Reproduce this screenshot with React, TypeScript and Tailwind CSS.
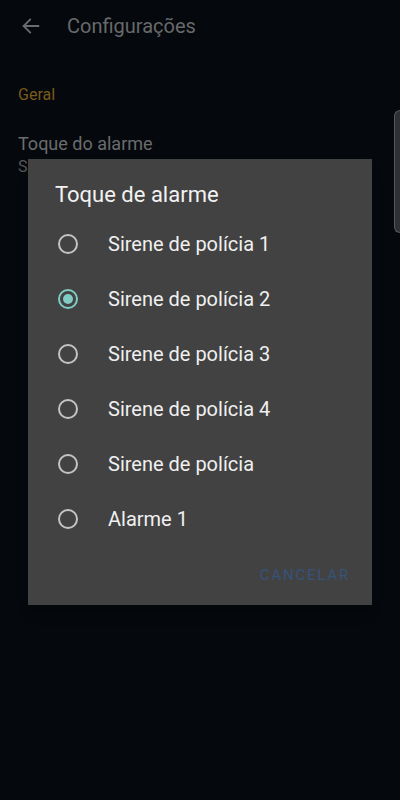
import { useState } from "react";

const OPTIONS = [
  "Sirene de polícia 1",
  "Sirene de polícia 2",
  "Sirene de polícia 3",
  "Sirene de polícia 4",
  "Sirene de polícia",
  "Alarme 1",
];

function Radio({ checked }: { checked: boolean }) {
  return (
    <span
      className={`flex h-[20px] w-[20px] shrink-0 items-center justify-center rounded-full border-2 ${
        checked ? "border-[#80cbc4]" : "border-[#c4c4c4]"
      }`}
    >
      {checked && <span className="h-[10px] w-[10px] rounded-full bg-[#80cbc4]" />}
    </span>
  );
}

export default function App() {
  const [selected, setSelected] = useState(1);

  return (
    <div
      className="relative h-[800px] w-[400px] overflow-hidden bg-[#05080c]"
      style={{ fontFamily: "Roboto, 'Noto Sans', sans-serif" }}
    >
      <div className="flex h-[52px] items-center pl-[20px]">
        <svg width="22" height="22" viewBox="0 0 24 24" fill="none">
          <path
            d="M20 12H4M11 5l-7 7 7 7"
            stroke="#6a6b6d"
            strokeWidth="2"
            strokeLinecap="square"
          />
        </svg>
        <span className="ml-[25px] text-[20px] text-[#68696b]">Configurações</span>
      </div>

      <div className="px-[18px] pt-[32px]">
        <p className="text-[16px] leading-[22px] text-[#7a5b1c]">Geral</p>
        <div className="mt-[26px]">
          <p className="text-[18px] leading-[24px] text-[#6b6c6e]">Toque do alarme</p>
          <p className="text-[16px] leading-[22px] text-[#55575a]">Sirene de polícia 2</p>
        </div>
      </div>

      <div className="absolute right-0 top-[110px] h-[123px] w-[6px] rounded-l-[6px] border border-r-0 border-[#55585c] bg-[#2e3034]" />

      <div className="absolute left-[28px] top-[159px] w-[344px] bg-[#424242] pb-[12px] shadow-lg">
        <h2 className="pl-[27px] pt-[22px] text-[22px] leading-[28px] text-[#f2f2f2]">
          Toque de alarme
        </h2>
        <div className="mt-[7px]">
          {OPTIONS.map((label, i) => (
            <button
              key={label}
              type="button"
              onClick={() => setSelected(i)}
              className="flex h-[55px] w-full items-center pl-[30px] text-left"
            >
              <Radio checked={selected === i} />
              <span className="ml-[30px] text-[20px] text-[#f0f0f0]">{label}</span>
            </button>
          ))}
        </div>
        <div className="mt-[11px] flex justify-end pr-[22px]">
          <button
            type="button"
            className="h-[36px] text-[15px] tracking-[0.12em] text-[#36537a]"
          >
            CANCELAR
          </button>
        </div>
      </div>
    </div>
  );
}
